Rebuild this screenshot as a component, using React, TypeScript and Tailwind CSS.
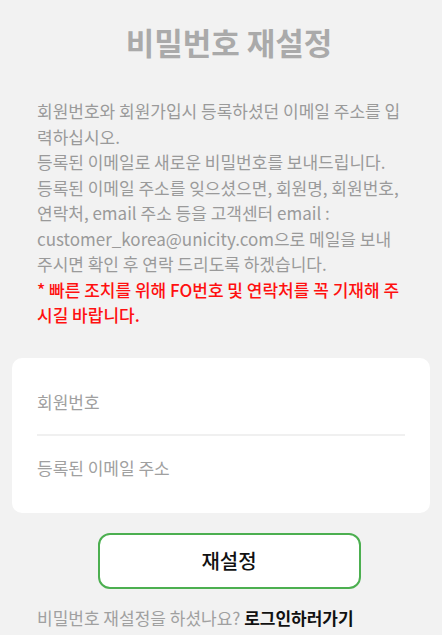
const lines = [
  "회원번호와 회원가입시 등록하셨던 이메일 주소를 입",
  "력하십시오.",
  "등록된 이메일로 새로운 비밀번호를 보내드립니다.",
  "등록된 이메일 주소를 잊으셨으면, 회원명, 회원번호,",
  "연락처, email 주소 등을 고객센터 email :",
  "customer_korea@unicity.com으로 메일을 보내",
  "주시면 확인 후 연락 드리도록 하겠습니다.",
];

const notice = ["* 빠른 조치를 위해 FO번호 및 연락처를 꼭 기재해 주", "시길 바랍니다."];

export default function App() {
  return (
    <div
      className="min-h-screen bg-[#f2f2f2] px-[12px] pt-[22px]"
      style={{ fontFamily: '"Noto Sans CJK KR", "Noto Sans", sans-serif' }}
    >
      <h1 className="pl-[16px] text-center text-[31px] font-bold leading-[40px] text-[#aaaaaa]">
        비밀번호 재설정
      </h1>

      {/* guide text */}
      <div className="mt-[36px] px-[25px] text-[17px] leading-[25.5px] text-[#9a9a9a]">
        {lines.map((l) => (
          <span key={l} className="block whitespace-nowrap">
            {l}
          </span>
        ))}
        {notice.map((l) => (
          <span key={l} className="block whitespace-nowrap font-medium text-[#ff1010]">
            {l}
          </span>
        ))}
      </div>

      {/* inputs */}
      <div className="mt-[30px] rounded-[10px] bg-white px-[25px] pb-[13px] pt-[12px]">
        <div className="flex h-[66px] items-center border-b-2 border-[#f0f0f0] text-[17px] text-[#a0a0a0]">
          회원번호
        </div>
        <div className="flex h-[64px] items-center text-[17px] text-[#a0a0a0]">
          등록된 이메일 주소
        </div>
      </div>

      <div className="mt-[20px] flex justify-center pl-[16px]">
        <button className="h-[56px] w-[263px] rounded-[12px] border-2 border-[#4caf50] bg-white text-[20px] font-medium text-[#111111]">
          재설정
        </button>
      </div>

      <p className="mt-[16px] whitespace-nowrap px-[25px] text-[17px] leading-[25px] text-[#a0a0a0]">
        비밀번호 재설정을 하셨나요? <span className="font-bold text-[#111111]">로그인하러가기</span>
      </p>
    </div>
  );
}
